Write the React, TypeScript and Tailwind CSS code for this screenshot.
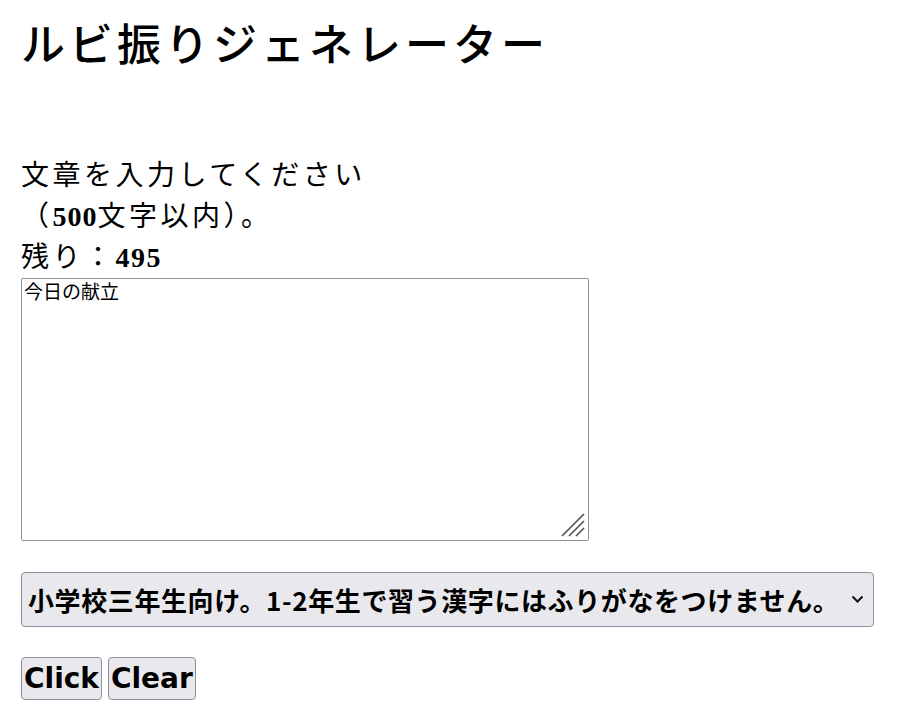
import React, { useState } from 'react';

const serif = "font-['Liberation_Serif','Noto_Sans_CJK_JP',serif]";

export default function App() {
  const [text, setText] = useState('今日の献立');
  const [level, setLevel] = useState('3');
  const remaining = 500 - text.length;

  return (
    <div className="min-h-[714px] bg-white px-[21px] pt-[19px] text-black">
      <h1 className={`${serif} text-[44px] leading-[56px] font-medium tracking-[4px]`}>
        ルビ振りジェネレーター
      </h1>

      <div className={`${serif} mt-[80px] text-[28px] leading-[41px] tracking-[3.5px]`}>
        <div>文章を入力してください</div>
        <div>
          （<span className="font-bold tracking-[1px]">500</span>文字以内）。
        </div>
        <div>
          残り：<span className="font-bold tracking-[1.5px]">{remaining}</span>
        </div>
      </div>

      <div className="relative w-[568px]">
        <textarea
          value={text}
          onChange={(e) => setText(e.target.value)}
          className="block h-[263px] w-full resize-none rounded-[2px] border border-[#8f8f9d] px-[2px] py-[1px] font-['Noto_Sans_CJK_JP',sans-serif] text-[19px] leading-[22px] outline-none"
        />
        {/* resize grip */}
        <svg
          className="pointer-events-none absolute bottom-[4px] right-[4px]"
          width="24"
          height="24"
          viewBox="0 0 24 24"
        >
          <g stroke="#555" strokeWidth="1.7">
            <line x1="1" y1="23" x2="23" y2="1" />
            <line x1="8" y1="23" x2="23" y2="8" />
            <line x1="15" y1="23" x2="23" y2="15" />
          </g>
        </svg>
      </div>

      <div className="relative mt-[31px] w-[853px]">
        <select
          value={level}
          onChange={(e) => setLevel(e.target.value)}
          className="block h-[55px] w-full appearance-none rounded-[4px] border border-[#8f8f9d] bg-[#e9e9ed] pl-[6px] pr-[36px] font-['Noto_Sans_CJK_JP',sans-serif] text-[26px] font-bold tracking-[0.6px] outline-none"
        >
          <option value="3">小学校三年生向け。1-2年生で習う漢字にはふりがなをつけません。</option>
          <option value="all">すべての漢字にふりがなをつけます。</option>
        </select>
        <svg
          className="pointer-events-none absolute right-[10px] top-[23px]"
          width="13"
          height="9"
          viewBox="0 0 13 9"
        >
          <path d="M1.5 1.5 L6.5 6.5 L11.5 1.5" fill="none" stroke="#111" strokeWidth="2" />
        </svg>
      </div>

      <div className="mt-[30px] flex gap-[6px]">
        <button className="h-[43px] rounded-[4px] border border-[#8f8f9d] bg-[#e9e9ed] px-[2px] font-['DejaVu_Sans',sans-serif] text-[28px] leading-none font-bold">
          Click
        </button>
        <button
          onClick={() => setText('')}
          className="h-[43px] rounded-[4px] border border-[#8f8f9d] bg-[#e9e9ed] px-[2px] font-['DejaVu_Sans',sans-serif] text-[28px] leading-none font-bold"
        >
          Clear
        </button>
      </div>
    </div>
  );
}
